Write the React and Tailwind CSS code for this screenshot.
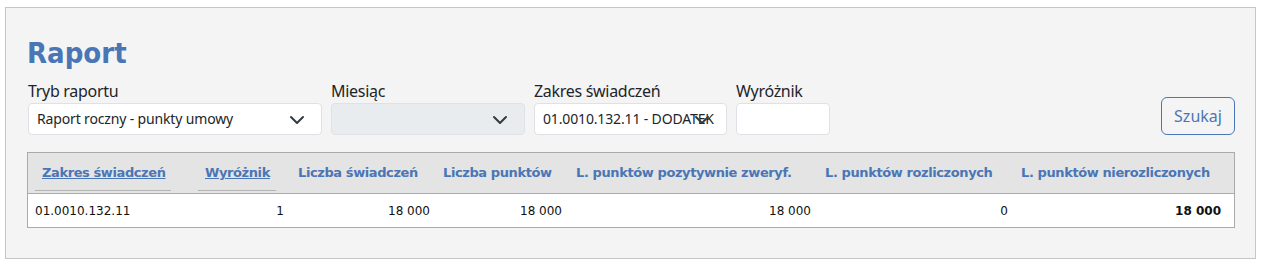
const cols = [
  { label: "Zakres świadczeń", w: "w-[162px]", hp: "pl-[14px]", link: true, line: "ml-[7px] w-[136px]" },
  { label: "Wyróżnik", w: "w-[104px]", hp: "pl-[15px]", link: true, line: "ml-[8px] w-[78px]" },
  { label: "Liczba świadczeń", w: "w-[146px]", hp: "pl-[4px]" },
  { label: "Liczba punktów", w: "w-[132px]", hp: "pl-[3px]" },
  { label: "L. punktów pozytywnie zweryf.", w: "w-[249px]", hp: "pl-[4px]" },
  { label: "L. punktów rozliczonych", w: "w-[197px]", hp: "pl-[4px]" },
  { label: "L. punktów nierozliczonych", w: "flex-1", hp: "pl-[3px]" },
];

const row = [
  { v: "01.0010.132.11", cls: "pl-[7px] text-left" },
  { v: "1", cls: "pr-[10px] text-right" },
  { v: "18 000", cls: "pr-[10px] text-right" },
  { v: "18 000", cls: "pr-[10px] text-right" },
  { v: "18 000", cls: "pr-[10px] text-right" },
  { v: "0", cls: "pr-[10px] text-right" },
  { v: "18 000", cls: "pr-[13px] text-right font-bold" },
];

const Chevron = () => (
  <svg
    className="absolute right-[16px] top-[11px]"
    width="16"
    height="10"
    viewBox="0 0 16 10"
    fill="none"
    stroke="#343a40"
    strokeWidth="2"
    strokeLinecap="round"
    strokeLinejoin="round"
  >
    <path d="M2 2l6 6 6-6" />
  </svg>
);

const Select = ({ width, value, disabled }) => (
  <div
    className={`relative flex h-[32px] items-center rounded-[4px] border border-[#dee2e6] ${width} ${
      disabled ? "bg-[#e9ecef]" : "bg-white"
    }`}
  >
    <span className="pl-[8px] text-[14px] leading-[20px] tracking-[-0.15px] text-[#212529] whitespace-nowrap">
      {value}
    </span>
    <Chevron />
  </div>
);

const Label = ({ children }) => (
  <div className="mb-[2px] text-[16px] leading-[20px] tracking-[-0.3px] text-[#212529]">{children}</div>
);

const App = () => {
  return (
    <div className="h-[267px] w-[1266px] bg-white pl-[5px] pt-[7px] font-['Noto_Sans',sans-serif]">
      <div className="h-[252px] w-[1251px] border border-[#c6c6c6] bg-[#f4f4f4] pl-[21px] pt-[27px]">
        <h1 className="font-['DejaVu_Sans_Condensed','DejaVu_Sans',sans-serif] text-[29px] font-bold leading-[36px] text-[#4a76b5]">
          Raport
        </h1>
        <div className="ml-[1px] mt-[10px] flex items-end">
          <div className="mr-[9px]">
            <Label>Tryb raportu</Label>
            <Select width="w-[294px]" value="Raport roczny - punkty umowy" />
          </div>
          <div className="mr-[9px]">
            <Label>Miesiąc</Label>
            <Select width="w-[194px]" value="" disabled />
          </div>
          <div className="mr-[9px]">
            <Label>Zakres świadczeń</Label>
            <Select width="w-[193px]" value="01.0010.132.11 - DODATEK" />
          </div>
          <div>
            <Label>Wyróżnik</Label>
            <div className="h-[32px] w-[94px] rounded-[4px] border border-[#dee2e6] bg-white" />
          </div>
          <div className="flex-1" />
          <button className="mr-[20px] h-[38px] w-[74px] rounded-[6px] border border-[#4a76b5] text-[16px] text-[#4a76b5]">
            Szukaj
          </button>
        </div>
        <div className="mt-[17px] w-[1208px] border border-[#aaaaaa] font-['DejaVu_Sans',sans-serif] text-[12px]">
          <div className="flex h-[41px] border-b border-[#aaaaaa] bg-[#e4e4e4]">
            {cols.map((c) => (
              <div key={c.label} className={`${c.w} relative flex flex-col justify-center`}>
                <span
                  className={`${c.hp} whitespace-nowrap text-[13px] font-bold tracking-[-0.4px] text-[#4a76b5] ${
                    c.link ? "underline" : ""
                  }`}
                >
                  {c.label}
                </span>
                {c.line && <div className={`absolute bottom-[2px] h-[1px] bg-[#b4b4b4] ${c.line}`} />}
              </div>
            ))}
          </div>
          <div className="flex h-[33px] items-center bg-white text-[#111]">
            {cols.map((c, i) => (
              <div key={c.label} className={`${c.w} whitespace-nowrap ${row[i].cls}`}>
                {row[i].v}
              </div>
            ))}
          </div>
        </div>
      </div>
    </div>
  );
};

export default App;
